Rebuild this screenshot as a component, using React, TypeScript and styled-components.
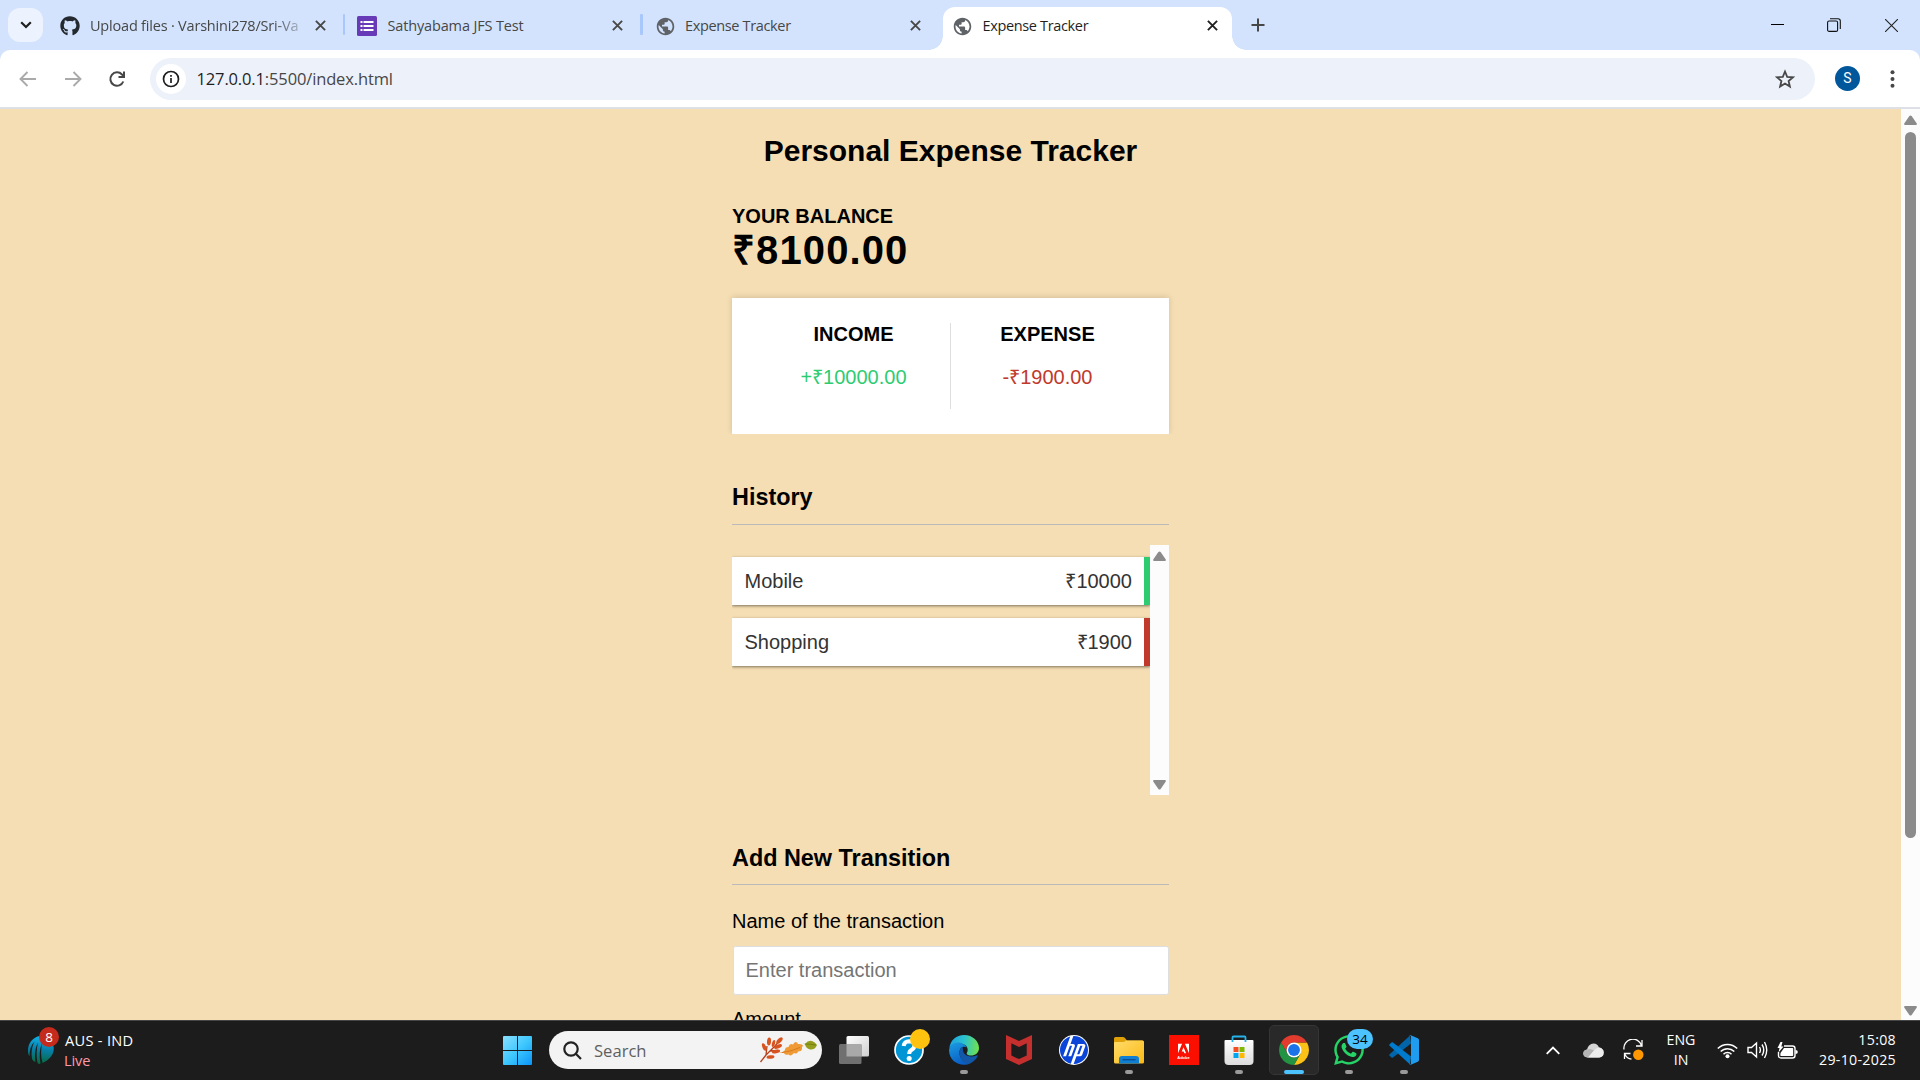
import React from 'react';
import styled, { createGlobalStyle, css } from 'styled-components';
import { FaGithub, FaWhatsapp } from 'react-icons/fa';
import { MdPublic } from 'react-icons/md';
import { SiHp, SiMcafee, SiAdobe } from 'react-icons/si';

const UI = "'Segoe UI', 'Open Sans', 'Noto Sans', sans-serif";
const SANS = "Arial, 'Liberation Sans', sans-serif";

const GlobalStyle = createGlobalStyle`
  *, *::before, *::after { box-sizing: border-box; }
  html, body { margin: 0; padding: 0; }
  body { width: 1920px; height: 1080px; overflow: hidden; }
  h1, h2, h3, h4, p, ul { margin: 0; padding: 0; font-weight: inherit; }
  svg { display: block; flex: none; }
`;

const Screen = styled.div`
  width: 1920px;
  height: 1080px;
  display: flex;
  flex-direction: column;
  overflow: hidden;
  background: #1c1c1c;
`;

/* ---------- Browser chrome ---------- */

const TabStrip = styled.header`
  height: 50px;
  flex: none;
  display: flex;
  background: #d3e3fd;
  font-family: ${UI};
`;

const TabSearch = styled.button`
  width: 35px;
  height: 34px;
  margin: 8px 4.5px 0 8px;
  padding: 0;
  border: 0;
  border-radius: 12px;
  background: #ecf3fe;
  display: grid;
  place-items: center;
`;

const Tab = styled.div<{ $active?: boolean; $divider?: boolean }>`
  position: relative;
  width: 297.5px;
  height: 50px;
  padding: 1px 19.5px 0 12px;
  display: flex;
  align-items: center;
  color: ${(p) => (p.$active ? '#1f1f1f' : '#474747')};
  ${(p) =>
    p.$divider &&
    css`
      &::after {
        content: '';
        position: absolute;
        right: 0;
        top: 14px;
        width: 2.5px;
        height: 21px;
        border-radius: 1px;
        background: #a8c7fa;
      }
    `}
  ${(p) =>
    p.$active &&
    css`
      width: 289px;
      margin: 7px 0 0 3px;
      height: 43px;
      padding: 0 14px 6px 9px;
      background: #fff;
      border-radius: 12px 12px 0 0;
      &::before,
      &::after {
        content: '';
        position: absolute;
        bottom: 0;
        width: 14px;
        height: 14px;
      }
      &::before {
        left: -14px;
        background: radial-gradient(circle at 0 0, transparent 13.5px, #fff 14px);
      }
      &::after {
        right: -14px;
        background: radial-gradient(circle at 100% 0, transparent 13.5px, #fff 14px);
      }
    `}
`;

const Favicon = styled.span`
  width: 20px;
  height: 20px;
  margin-right: 10.5px;
  display: grid;
  place-items: center;
  flex: none;
`;

const TabTitle = styled.span<{ $spacing: number; $fade?: boolean }>`
  flex: 1;
  min-width: 0;
  overflow: hidden;
  white-space: nowrap;
  font-size: 14.5px;
  line-height: 22px;
  letter-spacing: ${(p) => p.$spacing}px;
  margin-right: 10px;
  ${(p) =>
    p.$fade &&
    css`
      mask-image: linear-gradient(90deg, #000 calc(100% - 32px), rgba(0, 0, 0, 0.15));
    `}
`;

const WindowControls = styled.div`
  margin-left: auto;
  display: flex;
  align-items: center;
  height: 50px;
`;

const WindowButton = styled.span<{ $w?: number }>`
  width: ${(p) => p.$w ?? 57}px;
  height: 50px;
  display: grid;
  place-items: center;
`;

const NewTab = styled.span`
  width: 20px;
  height: 50px;
  margin-left: 16px;
  display: grid;
  place-items: center;
`;

const Toolbar = styled.div`
  height: 59px;
  flex: none;
  display: flex;
  align-items: center;
  padding: 0 16px 0 17px;
  background: #fff;
  border-bottom: 2px solid #dde0e4;
  border-radius: 10px 10px 0 0;
  font-family: ${UI};
`;

const ToolbarBacking = styled.div`
  flex: none;
  background: #d3e3fd;
`;

const NavIcons = styled.div`
  display: flex;
  gap: 22.5px;
  width: 133px;
`;

const Omnibox = styled.div`
  width: 1665px;
  height: 42px;
  margin-top: 1px;
  padding: 0 20px 0 6px;
  border-radius: 21px;
  background: #ecf1fa;
  display: flex;
  align-items: center;
`;

const SiteInfo = styled.span`
  width: 30px;
  height: 30px;
  border-radius: 50%;
  background: #fff;
  display: grid;
  place-items: center;
  margin-right: 10.5px;
`;

const Url = styled.span`
  flex: 1;
  font-size: 16.5px;
  line-height: 24px;
  letter-spacing: -0.14px;
  color: #474747;
  b {
    font-weight: 400;
    color: #1f1f1f;
  }
`;

const Avatar = styled.span`
  width: 25px;
  height: 25px;
  margin: 0 21px 0 20px;
  border-radius: 50%;
  background: #01579b;
  color: #fff;
  font: 14px/25px Roboto, sans-serif;
  text-align: center;
`;

/* ---------- Web page ---------- */

const Viewport = styled.div`
  height: 911px;
  flex: none;
  display: flex;
  overflow: hidden;
`;

const Page = styled.main`
  width: 1901px;
  height: 911px;
  overflow: hidden;
  background: #f5deb3;
  display: flex;
  flex-direction: column;
  align-items: center;
  padding-top: 25px;
  font-family: ${SANS};
  font-size: 20px;
  line-height: 23px;
  color: #000;
`;

const Title = styled.h2`
  font-size: 30px;
  line-height: 34px;
  font-weight: 700;
`;

const Container = styled.div`
  width: 437px;
  margin: 37px 0 0;
  flex: none;
`;

const SmallHeading = styled.h4`
  font-weight: 700;
  text-transform: uppercase;
`;

const Balance = styled.h1`
  font-size: 40px;
  line-height: 44px;
  font-weight: 700;
  letter-spacing: 1.1px;
`;

const Summary = styled.section`
  display: flex;
  height: 136px;
  margin-top: 26px;
  padding: 25px;
  background: #fff;
  box-shadow: 0 -1px 6px rgba(0, 0, 0, 0.14);
  clip-path: inset(-12px -12px 0 -12px);
`;

const Half = styled.div`
  flex: 1;
  text-align: center;
  & + & {
    border-left: 1px solid #dedede;
  }
`;

const Money = styled.p<{ $kind: 'plus' | 'minus' }>`
  margin-top: 20px;
  color: ${(p) => (p.$kind === 'plus' ? '#2ecc71' : '#c0392b')};
`;

const SectionTitle = styled.h3<{ $pad: number }>`
  margin-top: 50px;
  padding-bottom: ${(p) => p.$pad}px;
  border-bottom: 1px solid #bbb;
  font-size: 23.4px;
  line-height: 27px;
  font-weight: 700;
`;

const ListFrame = styled.div`
  display: flex;
  height: 250px;
  margin-top: 20px;
`;

const List = styled.ul`
  flex: 1;
  list-style: none;
  padding-top: 12px;
  overflow: hidden;
`;

const Entry = styled.li<{ $kind: 'plus' | 'minus' }>`
  display: flex;
  justify-content: space-between;
  height: 48px;
  margin-bottom: 13px;
  padding: 13px 12px 11px 12.5px;
  background: #fff;
  color: #333;
  border-right: 6px solid ${(p) => (p.$kind === 'plus' ? '#2ecc71' : '#c0392b')};
  box-shadow: 0 1px 4px rgba(0, 0, 0, 0.12), 0 1px 2.5px rgba(0, 0, 0, 0.4);
`;

const Scrollbar = styled.div<{ $pad: string }>`
  width: 19px;
  flex: none;
  display: flex;
  flex-direction: column;
  align-items: center;
  justify-content: space-between;
  padding: ${(p) => p.$pad};
  background: #fcfcfc;
`;

const Thumb = styled.div`
  width: 11px;
  height: 706px;
  margin: 7px 0 auto;
  border-radius: 6px;
  background: #8b8b8b;
`;

const Label = styled.label`
  display: block;
  margin-top: 25px;
`;

const Input = styled.input`
  display: block;
  width: 436px;
  height: 49px;
  margin: 13px 0 -12px 0.5px;
  padding: 0 12px 0 12px;
  border: 1px solid #dedede;
  border-radius: 2.5px;
  background: #fff;
  font: 20px/23px ${SANS};
  &::placeholder {
    color: #757575;
  }
`;

/* ---------- Taskbar ---------- */

const Taskbar = styled.footer`
  height: 60px;
  flex: none;
  display: flex;
  align-items: center;
  padding-bottom: 1px;
  background: #1c1c1c;
  border-top: 1px solid #454545;
  font-family: ${UI};
  font-size: 14.2px;
  line-height: 20px;
  color: #fff;
`;

const Widget = styled.div`
  width: 503px;
  padding-left: 27px;
  display: flex;
  align-items: center;
`;

const WidgetIcon = styled.span`
  position: relative;
  width: 38px;
  height: 30px;
`;

const Badge = styled.span<{ $bg: string; $w: number; $x: number; $y: number; $fg: string; $fs: number }>`
  position: absolute;
  left: ${(p) => p.$x}px;
  top: ${(p) => p.$y}px;
  width: ${(p) => p.$w}px;
  height: 20px;
  border-radius: 10px;
  background: ${(p) => p.$bg};
  color: ${(p) => p.$fg};
  font-size: ${(p) => p.$fs}px;
  line-height: 20px;
  text-align: center;
`;

const WidgetText = styled.div`
  font-size: 14.6px;
  p:first-child {
    letter-spacing: 0.3px;
  }
  p + p {
    color: #ff99a4;
    margin-left: -1px;
    letter-spacing: -0.1px;
  }
`;

const SearchBox = styled.div`
  width: 273px;
  height: 38px;
  margin: 0 4px 0 17px;
  padding: 0 5px 0 14px;
  border-radius: 19px;
  background: #f3f3f3;
  color: #5f5f5f;
  font-size: 16.6px;
  display: flex;
  align-items: center;
  span {
    flex: 1;
    margin-left: 12px;
    padding-top: 1px;
  }
`;

const AppButton = styled.div<{ $active?: boolean }>`
  position: relative;
  width: 55px;
  height: 50px;
  display: grid;
  place-items: center;
  ${(p) =>
    p.$active &&
    css`
      width: 50px;
      margin: 0 2.5px;
      border: 1px solid #353535;
      border-radius: 5px;
      background: #292929;
    `}
`;

const Running = styled.i<{ $active?: boolean }>`
  position: absolute;
  left: 50%;
  bottom: ${(p) => (p.$active ? 0 : 1)}px;
  transform: translateX(-50%);
  width: ${(p) => (p.$active ? 20 : 8)}px;
  height: 4px;
  border-radius: 2px;
  background: ${(p) => (p.$active ? '#4cc2ff' : '#9a9a9a')};
`;

const Tray = styled.div`
  margin-left: auto;
  padding-right: 24px;
  display: flex;
  align-items: center;
`;

const TrayItem = styled.span<{ $w: number }>`
  width: ${(p) => p.$w}px;
  display: grid;
  place-items: center;
`;

const TrayText = styled.div<{ $w: number; $align: 'center' | 'right'; $spacing?: number }>`
  width: ${(p) => p.$w}px;
  text-align: ${(p) => p.$align};
  letter-spacing: ${(p) => p.$spacing ?? 0}px;
  white-space: nowrap;
`;

/* ---------- Icons ---------- */

const Cross = ({ color = '#474747' }: { color?: string }) => (
  <svg width="11" height="11" viewBox="0 0 11 11" stroke={color} strokeWidth="1.9">
    <path d="M.9.9l9.2 9.2M10.1.9L.9 10.1" />
  </svg>
);

const Arrow = ({ flip }: { flip?: boolean }) => (
  <svg width="22" height="22" viewBox="0 0 22 22" fill="none" stroke="#aaa" strokeWidth="1.9">
    {flip ? <path d="M3 11h15M11.5 4l7 7-7 7" /> : <path d="M19 11H4M10.500 4l-7 7 7 7" />}
  </svg>
);

const Triangle = ({ down }: { down?: boolean }) => (
  <svg width="13" height="10" viewBox="0 0 13 10" fill="#8b8b8b">
    {down ? (
      <path d="M1.300 0h10.400q1.800.2.900 1.700L7.600 9q-1.100 1.200-2.200 0L.4 1.700Q-.5.2 1.300 0z" />
    ) : (
      <path d="M1.300 10h10.400q1.800-.2.900-1.700L7.600 1Q6.500-.2 5.400 1L.4 8.300Q-.5 9.800 1.300 10z" />
    )}
  </svg>
);

const FormsIcon = () => (
  <svg width="20" height="20" viewBox="0 0 20 20">
    <rect width="20" height="20" rx="1.500" fill="#673ab7" />
    <g fill="#fff">
      <path d="M3.500 5h2v2h-2zM3.500 9h2v2h-2zM3.500 13h2v2h-2zM6.500 5h10v2h-10zM6.500 9h10v2h-10zM6.500 13h10v2h-10z" />
    </g>
  </svg>
);

const CricketIcon = () => (
  <svg width="27" height="30" viewBox="0 0 27 30">
    <defs>
      <linearGradient id="ball" x1="0.600" y1="0" x2="0.500" y2="1">
        <stop offset="0" stopColor="#12b5ee" />
        <stop offset=".5" stopColor="#087ea6" />
        <stop offset="1" stopColor="#07683c" />
      </linearGradient>
    </defs>
    <path
      d="M13 1C6 2 .5 8 1 17q.3 3 1.500 4C2.500 15 4 10 7.500 6.500 4.500 12 4 18 5 24q1 2.500 3.500 3C7.500 20 8 13 11 7.500 9.500 14 9 21 10.500 28q1.500 1.500 3 .5C12 21 12.500 14 15 8c-1 7-1.500 13 .5 20C22 25 27 20 26.800 13 26 6 20 .5 13 1z"
      fill="url(#ball)"
    />
  </svg>
);

const WindowsIcon = () => (
  <svg width="29" height="29" viewBox="0 0 29 29">
    <defs>
      <linearGradient id="win" x1="0" y1="0" x2="1" y2="1">
        <stop offset="0" stopColor="#8be0ff" />
        <stop offset=".5" stopColor="#3fc8fd" />
        <stop offset="1" stopColor="#0a94f8" />
      </linearGradient>
    </defs>
    <path d="M1 0h13v14H0V1q0-1 1-1zM15 0h13q1 0 1 1v13H15zM0 15h14v14H1q-1 0-1-1zM15 15h14v13q0 1-1 1H15z" fill="url(#win)" />
  </svg>
);

const LeavesIcon = () => (
  <svg width="57" height="26" viewBox="0 0 57 26">
    <path d="M.500 25L6 18 15 9 20 3M6 18L7 9M10 14l8-.5" stroke="#b5401c" strokeWidth="1.300" fill="none" />
    <g fill="#d9531e">
      <ellipse cx="9" cy="4.500" rx="2" ry="4" transform="rotate(5 9 4.500)" />
      <ellipse cx="4.200" cy="10" rx="1.800" ry="4" transform="rotate(-22 4.200 10)" />
      <ellipse cx="19.500" cy="3.500" rx="2" ry="4" transform="rotate(45 19.500 3.500)" />
      <ellipse cx="18" cy="9.500" rx="1.800" ry="4.200" transform="rotate(68 18 9.500)" />
      <ellipse cx="16" cy="14.500" rx="1.700" ry="4.200" transform="rotate(80 16 14.500)" />
      <ellipse cx="10.500" cy="20" rx="1.700" ry="4" transform="rotate(82 10.500 20)" />
      <ellipse cx="13.500" cy="6.500" rx="1.500" ry="3.500" transform="rotate(15 13.500 6.500)" />
    </g>
    <path d="M19 15.500q4.500 0 6-2.500 0-3 3.500-3 1-4 4.500-2.500 3-4.500 5-.5 4-.5 5 1.500-1.500 1.500-1 3.500-.5 2.500-4 2.500-.5 3-4 1.500-3 4-5.500 1.500-4 1-4.500-1.500-1.500 0-5-.5z" fill="#ef9a35" />
    <path d="M22 15.500q9-1 18-5" stroke="#cf7418" strokeWidth=".8" fill="none" />
    <path d="M40 5q3 1 5 2 3-4 7-3 3 1 5 4-2 5-7 4.500-4-1-5-5-2-2-5-2.500z" fill="#969e1d" />
    <path d="M45 7q6 0 11 1" stroke="#6d7812" strokeWidth=".8" fill="none" />
  </svg>
);

const TaskViewIcon = () => (
  <svg width="30" height="28" viewBox="0 0 30 28">
    <defs>
      <linearGradient id="tv" x1="0" y1="0" x2="1" y2="1">
        <stop offset="0" stopColor="#fff" />
        <stop offset="1" stopColor="#cfcfcf" />
      </linearGradient>
    </defs>
    <rect x="7.500" y="0" width="22.500" height="20.500" rx="1.500" fill="url(#tv)" />
    <rect x="0" y="8" width="22.500" height="20" rx="1.500" fill="#707070" />
    <path d="M7.500 8h15v12.500h-15z" fill="#a9a9a9" />
  </svg>
);

const HelpIcon = () => (
  <svg width="30" height="30" viewBox="0 0 30 30">
    <circle cx="15" cy="15" r="14" fill="#0096d6" stroke="#fff" strokeWidth="1.700" />
    <path d="M9.700 11q.5-4.800 5.500-4.800 5.200.2 5.200 4.500 0 2.600-3 4.300-2.200 1.200-2.200 4" fill="none" stroke="#fff" strokeWidth="4" />
    <circle cx="15.200" cy="23.500" r="2.500" fill="#fff" />
  </svg>
);

const EdgeIcon = () => (
  <svg width="30" height="30" viewBox="0 0 30 30">
    <defs>
      <linearGradient id="e1" x1="0" y1="0.300" x2="1" y2="0.400">
        <stop offset="0" stopColor="#1fa0e0" />
        <stop offset=".5" stopColor="#2cc3cf" />
        <stop offset="1" stopColor="#6fe04e" />
      </linearGradient>
      <linearGradient id="e2" x1="0" y1="0" x2="0.400" y2="1">
        <stop offset="0" stopColor="#1b9de2" />
        <stop offset="1" stopColor="#0a5fc4" />
      </linearGradient>
    </defs>
    <path d="M.300 13C1.500 5 7.500 0 15 0c9 0 15 6.500 15 13 0 5-4 7.500-8 7.500-3.500 0-5-1.500-4-3 1.200-2 1-5.500-2-7.500C11.500 7 3.500 7.500.300 13z" fill="url(#e1)" />
    <path d="M0 15C1 9 6 7 10.500 7.500c3 .5 6 2.500 7 5-3-2-7 0-7 5 0 7 6 11.500 11 11C12 32.500 0 27 0 15z" fill="url(#e2)" />
    <path d="M10.500 17c0-2.500 1.500-4.500 3.500-5-1.500 7 5 11.500 13.500 8.500 1-.4 1.500.2 1 1-1.500 3-4.500 6-8.500 7.500-5 .5-9.500-5-9.500-12z" fill="#1257a8" />
  </svg>
);

const FolderIcon = () => (
  <svg width="30" height="27" viewBox="0 0 30 27">
    <defs>
      <linearGradient id="fo" x1="0" y1="0" x2="1" y2="1">
        <stop offset="0" stopColor="#ffdc6b" />
        <stop offset="1" stopColor="#fbb914" />
      </linearGradient>
    </defs>
    <path d="M0 1.500Q0 0 1.500 0H9q1 0 1.700.8L13 3.500h15q2 0 2 2V10H0z" fill="#e0a008" />
    <path d="M0 6q0-1 1-1h9l2-1.500h16.500q1.500 0 1.500 1.500v20q0 1.500-1.500 1.500h-27Q0 26.500 0 25z" fill="url(#fo)" />
    <path d="M5 26.500V22q0-3 3-3h14q3 0 3 3v4.500z" fill="#0f7fd2" />
    <path d="M8.500 22.700h13" stroke="#0a4f93" strokeWidth="1.400" />
  </svg>
);

const AdobeTile = styled.span`
  width: 30px;
  height: 30px;
  background: #fa0f00;
  color: #fff;
  display: flex;
  flex-direction: column;
  align-items: center;
  padding-top: 8px;
  gap: 2px;
  font: 700 4px/4px ${SANS};
`;

const StoreIcon = () => (
  <svg width="30" height="30" viewBox="0 0 30 30">
    <defs>
      <linearGradient id="st" x1="0" y1="0" x2="0" y2="1">
        <stop offset="0" stopColor="#fff" />
        <stop offset="1" stopColor="#dcdcdc" />
      </linearGradient>
    </defs>
    <path d="M.500 6q0-1 1-1h27q1 0 1 1v20q0 4-4 4h-21q-4 0-4-4z" fill="url(#st)" />
    <path d="M8.500 7V2.500q0-1 1-1h11q1 0 1 1V7" fill="none" stroke="#24b3ea" strokeWidth="1.800" />
    <path d="M9.500 12h5v5h-5z" fill="#f25022" />
    <path d="M15.500 12h5v5h-5z" fill="#7fba00" />
    <path d="M9.500 18h5v5h-5z" fill="#00a4ef" />
    <path d="M15.500 18h5v5h-5z" fill="#ffb900" />
  </svg>
);

const ChromeIcon = () => (
  <svg width="30" height="30" viewBox="0 0 48 48">
    <path d="M24 12h20.780A24 24 0 0124 48l10.400-18z" fill="#fbc116" />
    <path d="M24 0A24 24 0 003.220 12l10.400 18A12 12 0 0124 12h20.780A24 24 0 0024 0z" fill="#e33b2e" />
    <path d="M3.220 12A24 24 0 0024 48l10.400-18a12 12 0 01-20.780 0z" fill="#229342" />
    <circle cx="24" cy="24" r="12" fill="#fff" />
    <circle cx="24" cy="24" r="9.500" fill="#1a73e8" />
  </svg>
);

const CodeIcon = () => (
  <svg width="30" height="30" viewBox="0 0 30 30">
    <path d="M22 8.500L4 22.500q-.8.500-1.500 0L.6 20.800q-.8-.8 0-1.600L21 .6z" fill="#0065a9" />
    <path d="M22 21.500L4 7.500q-.8-.5-1.500 0L.6 9.200q-.8.800 0 1.600L21 29.400z" fill="#007acc" />
    <path d="M21.800 29.800q-1.200-.2-1.800-.8 2 1 2-1V2q0-2-2-1 .6-.6 1.800-.8l7 3Q30 3.800 30 5v20q0 1.200-1.200 1.800z" fill="#1f9cf0" />
  </svg>
);

const HpDisc = styled.span`
  width: 30px;
  height: 30px;
  border-radius: 50%;
  background: #fff;
  color: #0a45d8;
  display: grid;
  place-items: center;
`;

const CloudIcon = () => (
  <svg width="21" height="15" viewBox="0 0 21 15">
    <path d="M4.500 14.500Q.3 14 .3 10.300.6 7 4 6.500 5.500.8 10.500.5q4 0 5.500 4 4.500.8 4.700 5-.2 4.500-4.500 5z" fill="#d4d4d4" />
    <path d="M4 6.500q4-1.500 7 1l-6 7Q.3 14 .3 10.300.6 7 4 6.500z" fill="#b4b4b4" />
    <path d="M5 14.500l6-7q2-2.500 5-3 4.500.8 4.700 5-.2 4.500-4.500 5z" fill="#ececec" />
  </svg>
);

const SyncIcon = () => (
  <svg width="21" height="22" viewBox="0 0 21 22" fill="none" stroke="#fff" strokeWidth="1.300">
    <path d="M1 10.500A9 9 0 0118.500 6.500M19 1v6h-6M1.500 20v-5.500h6M2 15.500q2 4 6.500 4.700" />
    <circle cx="15.300" cy="15.800" r="5.200" fill="#ff9800" stroke="none" />
  </svg>
);

const WifiIcon = () => (
  <svg width="21" height="17" viewBox="0 0 21 17" fill="none" stroke="#fff" strokeWidth="1.500">
    <path d="M.8 6.500a13.500 13.500 0 0119.400 0M3.700 9.500a9.500 9.500 0 0113.600 0M6.500 12.200a5.600 5.600 0 018 0" />
    <circle cx="10.500" cy="14.300" r="2" fill="#fff" stroke="none" />
  </svg>
);

const VolumeIcon = () => (
  <svg width="21" height="18" viewBox="0 0 21 18" fill="none" stroke="#fff" strokeWidth="1.400">
    <path d="M1 6.500h3.500L9.500 2v14L4.500 11.500H1zM12.500 6q1.800 3 0 6M15 3.500q3.500 5.500 0 11M17.500 1q4.500 8 0 16" />
  </svg>
);

const BatteryIcon = () => (
  <svg width="21" height="17" viewBox="0 0 21 17">
    <path d="M7 4h8.500q2.500 0 2.500 2.500v7q0 2.500-2.500 2.500H4q-2.500 0-2.500-2.500V10" fill="none" stroke="#fff" strokeWidth="1.400" />
    <path d="M7 6h8.500q.7 0 .7.700v6.600q0 .7-.7.700H4q-.7 0-.7-.7L3.500 11z" fill="#fff" />
    <path d="M18.500 8q2.300 0 2.300 2t-2.300 2z" fill="#fff" />
    <path d="M3.500 0L.5 6h2L1.500 10.500 6.500 4.500H4.300L5.500 0z" fill="#fff" />
  </svg>
);

/* ---------- Data ---------- */

const tabs = [
  { title: 'Upload files · Varshini278/Sri-Va', icon: <FaGithub size={20} color="#24292f" />, divider: true, spacing: -0.2, fade: true },
  { title: 'Sathyabama JFS Test', icon: <FormsIcon />, divider: true, spacing: -0.15 },
  { title: 'Expense Tracker', icon: <MdPublic size={21} color="#5f6368" />, spacing: -0.35 },
  { title: 'Expense Tracker', icon: <MdPublic size={21} color="#5f6368" />, active: true, spacing: -0.35 },
];

const history: { name: string; amount: string; kind: 'plus' | 'minus' }[] = [
  { name: 'Mobile', amount: '₹10000', kind: 'plus' },
  { name: 'Shopping', amount: '₹1900', kind: 'minus' },
];

const apps = [
  { id: 'taskview', icon: <TaskViewIcon /> },
  { id: 'help', icon: <HelpIcon />, badge: <Badge $bg="#ffc20e" $w={20} $x={29} $y={4} $fg="#000" $fs={12} /> },
  { id: 'edge', icon: <EdgeIcon />, running: true },
  { id: 'mcafee', icon: <SiMcafee size={30} color="#c52f2d" /> },
  { id: 'hp', icon: <HpDisc><SiHp size={28} /></HpDisc> },
  { id: 'files', icon: <FolderIcon />, running: true },
  { id: 'adobe', icon: <AdobeTile><SiAdobe size={11} />Adobe</AdobeTile> },
  { id: 'store', icon: <StoreIcon />, running: true },
  { id: 'chrome', icon: <ChromeIcon />, running: true, active: true },
  { id: 'whatsapp', icon: <FaWhatsapp size={34} color="#25d366" />, running: true, badge: <Badge $bg="#4cc2ff" $w={26} $x={26} $y={4} $fg="#000" $fs={13.5}>34</Badge> },
  { id: 'code', icon: <CodeIcon />, running: true },
];

export default function App() {
  return (
    <Screen>
      <GlobalStyle />
      <TabStrip>
        <TabSearch>
          <svg width="12" height="8" viewBox="0 0 12 8" fill="none" stroke="#1f1f1f" strokeWidth="2.200">
            <path d="M1.200 1.200L6 6l4.800-4.800" />
          </svg>
        </TabSearch>
        {tabs.map((t, i) => (
          <Tab key={i} $active={t.active} $divider={t.divider}>
            <Favicon>{t.icon}</Favicon>
            <TabTitle $spacing={t.spacing} $fade={t.fade}>{t.title}</TabTitle>
            <Cross color={t.active ? '#1f1f1f' : '#474747'} />
          </Tab>
        ))}
        <NewTab>
          <svg width="14" height="14" viewBox="0 0 14 14" stroke="#474747" strokeWidth="2">
            <path d="M7 .500v13M.500 7h13" />
          </svg>
        </NewTab>
        <WindowControls>
          <WindowButton>
            <svg width="13" height="13" viewBox="0 0 13 13"><path d="M0 5h13v1H0z" fill="#000" /></svg>
          </WindowButton>
          <WindowButton $w={56}>
            <svg width="14" height="14" viewBox="0 0 14 14" fill="none" stroke="#111" strokeWidth="1.100">
              <rect x=".6" y="3" width="10" height="10.400" rx="1.500" />
              <path d="M3 .700h8q2.300 0 2.300 2.300v8" />
            </svg>
          </WindowButton>
          <WindowButton $w={58}>
            <svg width="13" height="13" viewBox="0 0 13 13" stroke="#222" strokeWidth="1.100"><path d="M0 0l13 13M13 0L0 13" /></svg>
          </WindowButton>
        </WindowControls>
      </TabStrip>

      <ToolbarBacking>
        <Toolbar>
          <NavIcons>
            <Arrow />
            <Arrow flip />
            <svg width="22" height="22" viewBox="0 0 22 22" fill="none" stroke="#474747" strokeWidth="2">
              <path d="M17.300 13.500A6.700 6.700 0 1116 6.500l2 2" />
              <path d="M18 3.500v5.500h-5.500" />
            </svg>
          </NavIcons>
          <Omnibox>
            <SiteInfo>
              <svg width="18" height="18" viewBox="0 0 18 18" fill="none" stroke="#1f1f1f" strokeWidth="1.700">
                <circle cx="9" cy="9" r="7.500" />
                <path d="M9 8v5M9 5v1.800" />
              </svg>
            </SiteInfo>
            <Url><b>127.0.0.1</b>:5500/index.html</Url>
            <svg width="20" height="20" viewBox="0 0 20 20" fill="none" stroke="#474747" strokeWidth="1.800">
              <path d="M10 2.500l2.200 5.300 5.700.5-4.300 3.700 1.300 5.600L10 14.600l-4.900 3 1.300-5.600-4.300-3.700 5.700-.5z" />
            </svg>
          </Omnibox>
          <Avatar>S</Avatar>
          <svg width="20" height="20" viewBox="0 0 20 20" fill="#474747">
            <circle cx="11.500" cy="3.300" r="2" />
            <circle cx="11.500" cy="10" r="2" />
            <circle cx="11.500" cy="16.700" r="2" />
          </svg>
        </Toolbar>
      </ToolbarBacking>

      <Viewport>
        <Page>
          <Title>Personal Expense Tracker</Title>
          <Container>
            <SmallHeading>Your Balance</SmallHeading>
            <Balance>₹8100.00</Balance>
            <Summary>
              <Half>
                <SmallHeading>Income</SmallHeading>
                <Money $kind="plus">+₹10000.00</Money>
              </Half>
              <Half>
                <SmallHeading>Expense</SmallHeading>
                <Money $kind="minus">-₹1900.00</Money>
              </Half>
            </Summary>
            <SectionTitle $pad={13}>History</SectionTitle>
            <ListFrame>
              <List>
                {history.map((h) => (
                  <Entry key={h.name} $kind={h.kind}>
                    <span>{h.name}</span>
                    <span>{h.amount}</span>
                  </Entry>
                ))}
              </List>
              <Scrollbar $pad="6px 0 5px">
                <Triangle />
                <Triangle down />
              </Scrollbar>
            </ListFrame>
            <SectionTitle $pad={12}>Add New Transition</SectionTitle>
            <Label>Name of the transaction</Label>
            <Input placeholder="Enter transaction" />
            <Label>Amount</Label>
          </Container>
        </Page>
        <Scrollbar $pad="6px 0 4px">
          <Triangle />
          <Thumb />
          <Triangle down />
        </Scrollbar>
      </Viewport>

      <Taskbar>
        <Widget>
          <WidgetIcon>
            <CricketIcon />
            <Badge $bg="#c42b1c" $w={20} $x={12} $y={-8} $fg="#fff" $fs={13.5}>8</Badge>
          </WidgetIcon>
          <WidgetText>
            <p>AUS - IND</p>
            <p>Live</p>
          </WidgetText>
        </Widget>
        <WindowsIcon />
        <SearchBox>
          <svg width="19" height="19" viewBox="0 0 19 19" fill="none" stroke="#222" strokeWidth="2.200">
            <circle cx="8" cy="8" r="6.700" />
            <path d="M12.800 12.800l5.200 5.200" />
          </svg>
          <span>Search</span>
          <LeavesIcon />
        </SearchBox>
        {apps.map((a) => (
          <AppButton key={a.id} $active={a.active}>
            {a.icon}
            {a.badge}
            {a.running && <Running $active={a.active} />}
          </AppButton>
        ))}
        <Tray>
          <TrayItem $w={40}>
            <svg width="14" height="9" viewBox="0 0 14 9" fill="none" stroke="#fff" strokeWidth="1.800"><path d="M.7 7.800L7 1.500l6.300 6.300" /></svg>
          </TrayItem>
          <TrayItem $w={40}><CloudIcon /></TrayItem>
          <TrayItem $w={40}><SyncIcon /></TrayItem>
          <TrayText $w={56} $align="center"><p>ENG</p><p>IN</p></TrayText>
          <TrayItem $w={37}><WifiIcon /></TrayItem>
          <TrayItem $w={23}><VolumeIcon /></TrayItem>
          <TrayItem $w={37}><BatteryIcon /></TrayItem>
          <TrayText $w={90} $align="right" $spacing={0.3}><p>15:08</p><p>29-10-2025</p></TrayText>
        </Tray>
      </Taskbar>
    </Screen>
  );
}
